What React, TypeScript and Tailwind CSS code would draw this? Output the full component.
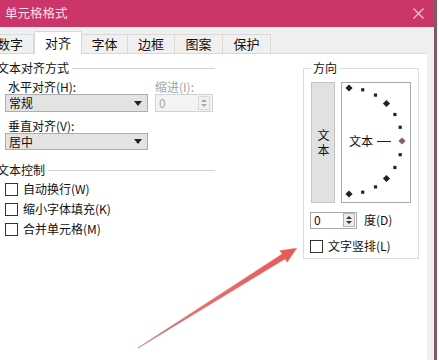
import React from 'react';

const tabs = [
  { label: '数字', w: 'w-[48px]' },
  { label: '对齐', w: 'w-[48px]', active: true },
  { label: '字体', w: 'w-[47px]' },
  { label: '边框', w: 'w-[48px]' },
  { label: '图案', w: 'w-[49px]' },
  { label: '保护', w: 'w-[49px]' },
];

const DownArrow = () => (
  <svg width="8" height="5" viewBox="0 0 8 5">
    <path d="M0 0 H8 L4 5 Z" fill="#222" />
  </svg>
);

const SpinButtons = ({ disabled }: { disabled?: boolean }) => (
  <div
    className={`flex flex-col items-center justify-center gap-[2px] w-[12px] h-[14px] border ${
      disabled ? 'border-[#d8d8d8] bg-[#f3f3f3]' : 'border-[#b4b4b4] bg-[#ececec]'
    }`}
  >
    <svg width="6" height="3" viewBox="0 0 6 3">
      <path d="M0 3 L3 0 L6 3 Z" fill={disabled ? '#a8a8a8' : '#333'} />
    </svg>
    <svg width="6" height="3" viewBox="0 0 6 3">
      <path d="M0 0 H6 L3 3 Z" fill={disabled ? '#a8a8a8' : '#333'} />
    </svg>
  </div>
);

const Checkbox = ({ label }: { label: string }) => (
  <div className="flex items-center h-[20px] pl-[5px]">
    <div className="w-[13px] h-[13px] border border-[#333] bg-white" />
    <span className="ml-[5px]">{label}</span>
  </div>
);

// orientation dial: dots every 15° on a half circle
const Dial = () => {
  const cx = 7;
  const cy = 58;
  const r = 53;
  const marks = [];
  for (let a = 90; a >= -90; a -= 15) {
    const rad = (a * Math.PI) / 180;
    const x = cx + r * Math.cos(rad);
    const y = cy - r * Math.sin(rad);
    if (a % 45 === 0) {
      const s = 3.6;
      marks.push(
        <path
          key={a}
          d={`M${x} ${y - s} L${x + s} ${y} L${x} ${y + s} L${x - s} ${y} Z`}
          fill={a === 0 ? '#7e6464' : '#222'}
        />
      );
    } else {
      marks.push(<rect key={a} x={x - 1.6} y={y - 1.6} width="3.2" height="3.2" fill="#222" />);
    }
  }
  return (
    <svg width="68" height="119" viewBox="0 0 68 119">
      {marks}
      <text x="7" y="63" fontSize="12" fill="#111" fontFamily="'Noto Sans CJK SC', sans-serif">
        文本
      </text>
      <line x1="35" y1="58.5" x2="49" y2="58.5" stroke="#222" strokeWidth="1" />
    </svg>
  );
};

export default function App() {
  return (
    <div className="relative w-[439px] h-[360px] overflow-hidden bg-[#fafafa] font-['Noto_Sans_CJK_SC','Liberation_Sans',sans-serif] text-[12px] text-[#111]">
      <div className="flex flex-col w-[437px] h-full border-r-[3px] border-[#7b5a66] bg-[#f0f0f0]">
        {/* title bar */}
        <div className="flex items-center justify-between h-[27px] shrink-0 pl-[5px] pr-[10px] bg-[#cb3568] text-[#f8dfe7] text-[12.5px]">
          <span>单元格格式</span>
          <svg width="11" height="11" viewBox="0 0 11 11">
            <path d="M0.5 0.5 L10.5 10.5 M10.5 0.5 L0.5 10.5" stroke="#f2c4d3" strokeWidth="1.3" />
          </svg>
        </div>

        {/* tabs */}
        <div className="relative z-10 flex items-end h-[26px] shrink-0 ml-[-13px] text-[13px]">
          {tabs.map((t) =>
            t.active ? (
              <div
                key={t.label}
                className={`${t.w} h-[23px] mb-[-1px] flex items-center justify-center bg-white border border-b-0 border-[#d9d9d9]`}
              >
                {t.label}
              </div>
            ) : (
              <div
                key={t.label}
                className={`${t.w} h-[19px] ml-[-1px] flex items-center justify-center bg-[#f0f0f0] border border-b-0 border-[#d9d9d9]`}
              >
                {t.label}
              </div>
            )
          )}
        </div>

        <div className="flex flex-1 min-h-0">
          {/* panel */}
          <div className="flex w-[427px] pt-[6px] bg-white border-t border-[#d9d9d9]">
            {/* left column */}
            <div className="flex flex-col w-[215px]">
              <div className="flex items-center h-[16px] ml-[-3px]">
                <span>文本对齐方式</span>
                <div className="flex-1 h-px ml-[3px] bg-[#d2d2d2]" />
              </div>

              <div className="flex mt-[3px] pl-[5px]">
                <div className="flex flex-col w-[143px]">
                  <span className="h-[16px] leading-[16px] pl-[3px]">水平对齐(H):</span>
                  <div className="flex items-center justify-between h-[18px] mt-[-1px] pl-[3px] pr-[5px] bg-[#e3e3e3] border border-[#adadad]">
                    <span>常规</span>
                    <DownArrow />
                  </div>
                </div>
                <div className="flex flex-col w-[58px] ml-[7px] text-[#a6a6a6]">
                  <span className="h-[16px] leading-[16px]">缩进(I):</span>
                  <div className="flex items-center justify-between h-[18px] mt-[-1px] pl-[3px] pr-[2px] bg-[#f3f3f3] border border-[#d2d2d2]">
                    <span>0</span>
                    <SpinButtons disabled />
                  </div>
                </div>
              </div>

              <div className="flex flex-col w-[148px] mt-[6px] pl-[5px]">
                <span className="h-[16px] leading-[16px] pl-[3px]">垂直对齐(V):</span>
                <div className="flex items-center justify-between h-[17px] mt-[-1px] pl-[3px] pr-[5px] bg-[#e3e3e3] border border-[#adadad]">
                  <span>居中</span>
                  <DownArrow />
                </div>
              </div>

              <div className="flex items-center h-[16px] mt-[12px] ml-[-3px]">
                <span>文本控制</span>
                <div className="flex-1 h-px ml-[3px] bg-[#d2d2d2]" />
              </div>

              <div className="flex flex-col mt-[1px]">
                <Checkbox label="自动换行(W)" />
                <Checkbox label="缩小字体填充(K)" />
                <Checkbox label="合并单元格(M)" />
              </div>
            </div>

            {/* orientation group */}
            <fieldset className="ml-[88px] w-[116px] h-[199px] border border-[#dcdcdc]">
              <legend className="ml-[7px] px-[2px] h-[16px] leading-[16px]">方向</legend>
              <div className="flex mt-[6px] ml-[7px]">
                <div className="flex items-center justify-center w-[24px] h-[121px] bg-[#e1e1e1] border border-[#c4c4c4]">
                  <span className="[writing-mode:vertical-rl] tracking-[3px] leading-[12px] pt-[2px]">文本</span>
                </div>
                <div className="ml-[6px] w-[70px] h-[121px] border border-[#a9a9a9] bg-white">
                  <Dial />
                </div>
              </div>
              <div className="flex items-center mt-[8px] ml-[6px]">
                <div className="flex items-center justify-between w-[47px] h-[17px] pl-[3px] pr-[1px] bg-white border border-[#a9a9a9]">
                  <span className="leading-[14px]">0</span>
                  <SpinButtons />
                </div>
                <span className="ml-[7px]">度(D)</span>
              </div>
              <div className="flex items-center h-[16px] mt-[9px] ml-[6px]">
                <div className="w-[13px] h-[13px] border border-[#333] bg-white" />
                <span className="ml-[5px]">文字竖排(L)</span>
              </div>
            </fieldset>
          </div>
          <div className="flex-1" />
        </div>
      </div>

      {/* red annotation arrow */}
      <svg className="absolute inset-0 pointer-events-none" width="439" height="360" viewBox="0 0 439 360">
        <defs>
          <linearGradient id="arrowGrad" gradientUnits="userSpaceOnUse" x1="138" y1="348" x2="297" y2="248">
            <stop offset="0" stopColor="#9c7584" />
            <stop offset="0.35" stopColor="#e07272" />
            <stop offset="1" stopColor="#e85858" />
          </linearGradient>
        </defs>
        <polygon
          points="297,248 287.2,262.5 285.1,259.1 138.2,348.3 137.8,347.7 281.9,254 279.7,250.6"
          fill="url(#arrowGrad)"
          stroke="#f2a0a0"
          strokeOpacity="0.35"
          strokeWidth="1"
        />
      </svg>
    </div>
  );
}
